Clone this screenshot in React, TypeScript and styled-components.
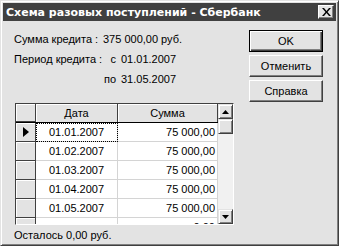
import React from 'react';
import styled, { createGlobalStyle } from 'styled-components';

const GlobalStyle = createGlobalStyle`
  html, body {
    margin: 0;
    padding: 0;
    background: #ffffff;
  }
  body {
    font-family: 'Liberation Sans', Arial, sans-serif;
    font-size: 11px;
    color: #000000;
  }
`;

type Payment = {
  date: string;
  amount: string;
};

const payments: Payment[] = [
  { date: '01.01.2007', amount: '75 000,00' },
  { date: '01.02.2007', amount: '75 000,00' },
  { date: '01.03.2007', amount: '75 000,00' },
  { date: '01.04.2007', amount: '75 000,00' },
  { date: '01.05.2007', amount: '75 000,00' },
  { date: '', amount: '0,00' },
];

const App: React.FC = () => {
  return (
    <>
      <GlobalStyle />
      <Window>
        <TitleBar>
          <Title>Схема разовых поступлений - Сбербанк</Title>
          <CloseButton>
            <svg width="9" height="8" viewBox="0 0 9 8">
              <path d="M0 0h2l2.5 3 2.5-3h2L5.5 4 9 8H7L4.5 5 2 8H0l3.5-4z" fill="#000" />
            </svg>
          </CloseButton>
        </TitleBar>

        <Content>
          <LeftPane>
            <Info>
              <Label>Сумма кредита :</Label>
              <Value $span>375 000,00 руб.</Value>
              <Label>Период кредита :</Label>
              <Prefix>с</Prefix>
              <Value>01.01.2007</Value>
              <Label />
              <Prefix>по</Prefix>
              <Value>31.05.2007</Value>
            </Info>

            <GridFrame>
              <GridMain>
                <HeaderRow>
                  <IndicatorCell />
                  <HeaderCell>Дата</HeaderCell>
                  <HeaderCell>Сумма</HeaderCell>
                </HeaderRow>
                {payments.map((p, i) => (
                  <DataRow key={i}>
                    <IndicatorCell>{i === 0 && <Arrow />}</IndicatorCell>
                    <DateCell $focused={i === 0}>{p.date}</DateCell>
                    <SumCell>{p.amount}</SumCell>
                  </DataRow>
                ))}
              </GridMain>
              <ScrollBar>
                <ScrollButton>
                  <svg width="7" height="4" viewBox="0 0 7 4">
                    <path d="M3.5 0L7 4H0z" fill="#000" />
                  </svg>
                </ScrollButton>
                <Thumb />
                <Track />
                <ScrollButton>
                  <svg width="7" height="4" viewBox="0 0 7 4">
                    <path d="M0 0h7L3.5 4z" fill="#000" />
                  </svg>
                </ScrollButton>
              </ScrollBar>
            </GridFrame>
          </LeftPane>

          <ButtonColumn>
            <DialogButton $default>OK</DialogButton>
            <DialogButton>Отменить</DialogButton>
            <DialogButton>Справка</DialogButton>
          </ButtonColumn>
        </Content>

        <Status>Осталось 0,00 руб.</Status>
      </Window>
    </>
  );
};

export default App;

const Window = styled.div`
  width: 339px;
  height: 246px;
  box-sizing: border-box;
  background: #e3e3e3;
  border: 1px solid;
  border-color: #e3e3e3 #404040 #404040 #e3e3e3;
  box-shadow: inset 1px 1px 0 #ffffff, inset -1px -1px 0 #808080;
  padding: 2px;
  display: flex;
  flex-direction: column;
`;

const TitleBar = styled.div`
  height: 18px;
  background: #404040;
  display: flex;
  align-items: center;
  justify-content: space-between;
  padding: 0 2px 0 3px;
`;

const Title = styled.div`
  color: #ffffff;
  font-weight: bold;
  font-size: 11px;
  font-family: 'DejaVu Sans', 'Liberation Sans', sans-serif;
`;

const CloseButton = styled.div`
  width: 16px;
  height: 14px;
  box-sizing: border-box;
  background: #e3e3e3;
  border: 1px solid;
  border-color: #ffffff #404040 #404040 #ffffff;
  box-shadow: inset -1px -1px 0 #808080;
  display: flex;
  align-items: center;
  justify-content: center;
`;

const Content = styled.div`
  flex: 1;
  display: flex;
  justify-content: space-between;
  padding: 9px 13px 0 11px;
`;

const LeftPane = styled.div`
  display: flex;
  flex-direction: column;
`;

const Info = styled.div`
  display: grid;
  grid-template-columns: 86px 21px auto;
  grid-auto-rows: 13px;
  row-gap: 7px;
  margin-top: 3px;
  line-height: 13px;
`;

const Label = styled.div`
  white-space: nowrap;
`;

const Prefix = styled.div`
  text-align: right;
  padding-right: 5px;
`;

const Value = styled.div<{ $span?: boolean }>`
  white-space: nowrap;
  grid-column: ${({ $span }) => ($span ? '2 / 4' : 'auto')};
  padding-left: ${({ $span }) => ($span ? '3px' : '0')};
`;

const GridFrame = styled.div`
  margin-top: 17px;
  margin-left: 1px;
  width: 219px;
  height: 122px;
  box-sizing: border-box;
  border: 1px solid;
  border-color: #404040 #ffffff #ffffff #404040;
  display: flex;
  overflow: hidden;
`;

const GridMain = styled.div`
  width: 202px;
  background: #ffffff;
  overflow: hidden;
`;

const HeaderRow = styled.div`
  display: grid;
  grid-template-columns: 20px 82px 100px;
  height: 19px;
  background: #e3e3e3;
  border-bottom: 1px solid #000000;
  box-sizing: border-box;
`;

const DataRow = styled.div`
  display: grid;
  grid-template-columns: 20px 82px 100px;
  height: 19px;
`;

const IndicatorCell = styled.div`
  background: #e3e3e3;
  box-sizing: border-box;
  border-right: 1px solid #404040;
  border-bottom: 1px solid #404040;
  box-shadow: inset 1px 1px 0 #ffffff;
  display: flex;
  align-items: center;
  justify-content: center;
`;

const Arrow = styled.div`
  width: 0;
  height: 0;
  border-top: 5px solid transparent;
  border-bottom: 5px solid transparent;
  border-left: 6px solid #000000;
`;

const HeaderCell = styled.div`
  box-sizing: border-box;
  border-right: 1px solid #404040;
  box-shadow: inset 1px 1px 0 #ffffff;
  text-align: center;
  line-height: 18px;
`;

const DateCell = styled.div<{ $focused?: boolean }>`
  box-sizing: border-box;
  border-right: 1px solid #d4d4d4;
  border-bottom: 1px solid #d4d4d4;
  outline: ${({ $focused }) => ($focused ? '1px dotted #000000' : 'none')};
  outline-offset: -1px;
  text-align: center;
  line-height: 18px;
`;

const SumCell = styled.div`
  box-sizing: border-box;
  border-right: 1px solid #d4d4d4;
  border-bottom: 1px solid #d4d4d4;
  text-align: right;
  padding-right: 2px;
  line-height: 18px;
`;

const ScrollBar = styled.div`
  width: 15px;
  display: flex;
  flex-direction: column;
  background: #f1f1f1;
`;

const ScrollButton = styled.div`
  height: 15px;
  box-sizing: border-box;
  background: #e3e3e3;
  border: 1px solid;
  border-color: #e3e3e3 #404040 #404040 #e3e3e3;
  box-shadow: inset 1px 1px 0 #ffffff, inset -1px -1px 0 #808080;
  display: flex;
  align-items: center;
  justify-content: center;
`;

const Thumb = styled(ScrollButton)``;

const Track = styled.div`
  flex: 1;
`;

const ButtonColumn = styled.div`
  display: flex;
  flex-direction: column;
  gap: 3px;
`;

const DialogButton = styled.div<{ $default?: boolean }>`
  width: 74px;
  height: 22px;
  box-sizing: border-box;
  background: #e3e3e3;
  border: 1px solid;
  border-color: ${({ $default }) =>
    $default ? '#000000' : '#ffffff #404040 #404040 #ffffff'};
  box-shadow: ${({ $default }) =>
    $default
      ? 'inset 1px 1px 0 #ffffff, inset -1px -1px 0 #404040, inset -2px -2px 0 #808080'
      : 'inset -1px -1px 0 #808080'};
  display: flex;
  align-items: center;
  justify-content: center;
  font-size: 11px;
`;

const Status = styled.div`
  padding: 0 0 1px 11px;
  line-height: 13px;
`;
